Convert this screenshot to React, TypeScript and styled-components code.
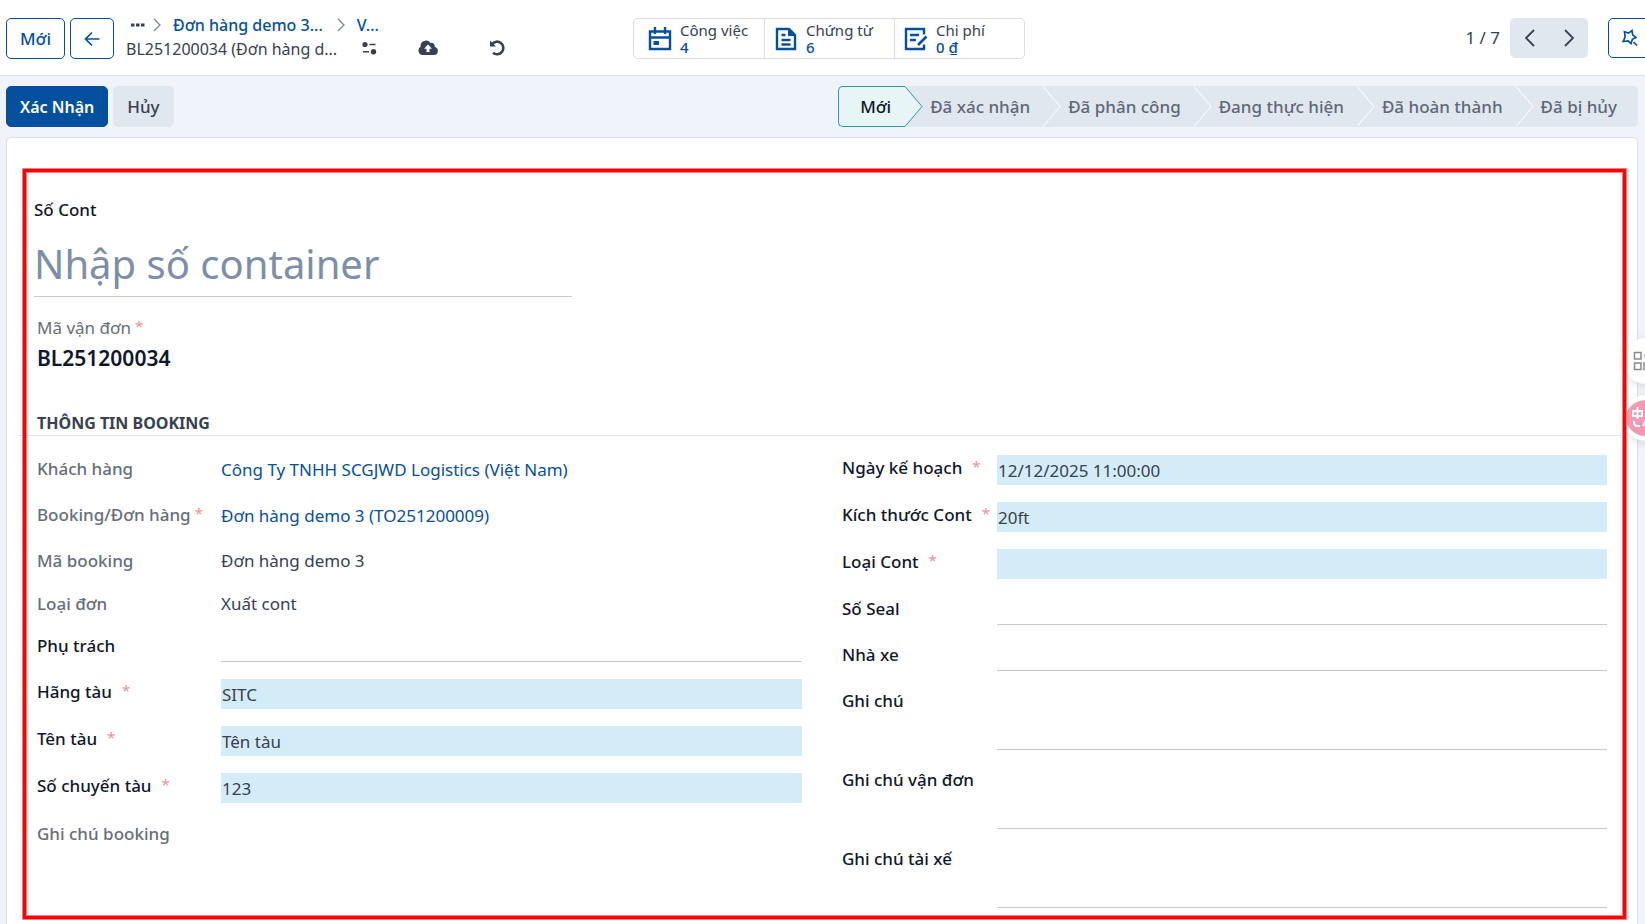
import React from 'react';
import styled, { createGlobalStyle, css } from 'styled-components';

const GlobalStyle = createGlobalStyle`
  *, *::before, *::after { box-sizing: border-box; }
  html, body { margin: 0; height: 100%; }
  body {
    font-family: 'Segoe UI', 'Noto Sans', sans-serif;
    font-size: 17px;
    line-height: 24px;
    color: #374151;
    background: #f0f3f9;
  }
  button, input, textarea { font: inherit; color: inherit; }
  a { color: #04509e; text-decoration: none; }
`;

const Page = styled.div`
  position: relative;
  display: flex;
  flex-direction: column;
  height: 100vh;
  overflow: hidden;
`;

/* Control panel */

const ControlPanel = styled.header`
  display: grid;
  grid-template-columns: minmax(0, 627px) auto 1fr;
  flex: none;
  height: 76px;
  padding: 18px 0 16px 6px;
  background: #fff;
  border-bottom: 1px solid #d8dfea;
`;

const PanelStart = styled.div`
  display: flex;
  align-items: flex-start;
`;

type ButtonKind = 'outline' | 'primary' | 'secondary';

const Button = styled.button<{ $kind: ButtonKind }>`
  display: inline-flex;
  align-items: center;
  justify-content: center;
  height: 41px;
  padding: 0 13px;
  border: 1px solid #04509e;
  border-radius: 5px;
  font-weight: 500;
  white-space: nowrap;
  background: #fff;
  color: #04509e;
  ${({ $kind }) => $kind === 'primary' && css`
    background: #04509e;
    color: #fff;
    font-size: 16px;
    font-weight: 600;
  `}
  ${({ $kind }) => $kind === 'secondary' && css`
    background: #e1e7ef;
    border-color: #e1e7ef;
    color: #374151;
  `}
`;

const ButtonGroup = styled.div`
  display: flex;
  gap: 5px;
`;

const Breadcrumbs = styled.nav`
  display: flex;
  flex-direction: column;
  margin: -5px 0 0 12px;
`;

const Trail = styled.div`
  display: flex;
  align-items: center;
  height: 24px;
  padding-left: 5px;
  font-size: 16px;
  font-weight: 500;
  svg { margin: 0 12px 0 8px; color: #7b8494; }
  a + svg { margin-left: 14px; }
`;

const MoreButton = styled.button`
  display: flex;
  padding: 0;
  border: 0;
  background: none;
  svg { margin: 0; color: #374151; }
`;

const Current = styled.div`
  display: flex;
  align-items: center;
  height: 24px;
  font-size: 16px;
`;

const IconButton = styled.button<{ $gap: number }>`
  display: flex;
  margin-left: ${({ $gap }) => $gap}px;
  padding: 0 0 2px;
  border: 0;
  background: none;
  color: #374151;
`;

const Stats = styled.div`
  display: grid;
  grid-template-columns: repeat(3, 130px);
  height: 41px;
  border: 1px solid #d9dce9;
  border-radius: 5px;
`;

const Stat = styled.button`
  display: flex;
  align-items: center;
  gap: 8px;
  padding: 0 0 0 9px;
  border: 0;
  background: none;
  text-align: left;
  font-size: 15px;
  line-height: 17px;
  white-space: nowrap;
  &:first-child { padding-left: 14px; }
  & + & { border-left: 1px solid #d9dce9; }
  svg { flex: none; color: #04509e; }
  strong { display: block; font-weight: 500; color: #04509e; }
`;

const PanelEnd = styled.div`
  display: flex;
  justify-content: flex-end;
  align-items: center;
  height: 40px;
`;

const Pager = styled.div`
  display: flex;
  margin: 0 20px 0 10px;
  border-radius: 5px;
  background: #e1e7ef;
`;

const PagerButton = styled.button`
  display: flex;
  align-items: center;
  justify-content: center;
  width: 39px;
  height: 40px;
  padding: 0;
  border: 0;
  background: none;
  color: #374151;
`;

const PinButton = styled(Button)`
  width: 45px;
  height: 40px;
  margin-right: -8px;
  padding: 0 2px 0 0;
`;

/* Status bar */

const StatusBar = styled.div`
  display: flex;
  justify-content: space-between;
  flex: none;
  padding: 10px 7px 10px 6px;
`;

const Steps = styled.ol`
  display: flex;
  margin: 0;
  padding: 0;
  list-style: none;
`;

const Step = styled.li<{ $active?: boolean }>`
  position: relative;
  display: flex;
  align-items: center;
  height: 41px;
  padding: 0 13px 0 25px;
  font-weight: 500;
  color: #5f6877;
  background: #e1e7ef;
  &:last-child { padding-right: 21px; border-radius: 0 5px 5px 0; }
  ${({ $active }) => $active && css`
    padding: 0 14px 0 21px;
    color: #0f172a;
    background: #e8f5f5;
    border: 1px solid #2b9a9a;
    border-right: 0;
    border-radius: 5px 0 0 5px;
  `}
`;

const StepTip = styled.svg<{ $active?: boolean }>`
  position: absolute;
  z-index: 1;
  top: ${({ $active }) => ($active ? -1 : 0)}px;
  right: -18px;
  fill: ${({ $active }) => ($active ? '#e8f5f5' : '#e1e7ef')};
  stroke: ${({ $active }) => ($active ? '#2b9a9a' : '#fff')};
`;

/* Form sheet */

const Sheet = styled.main`
  flex: 1 0 auto;
  margin: 0 7px 0 6px;
  padding: 30px 10px 16px;
  border: 1px solid #d8dfea;
  border-radius: 5px;
  background: #fff;
`;

const Framed = styled.div`
  position: relative;
  padding-bottom: 12px;
`;

const Frame = styled.div`
  position: absolute;
  z-index: 3;
  inset: 1px 1px 1px 6px;
  border: 3px solid #f00;
  box-shadow: 0 0 0 1px #ff8080, inset 0 0 0 1px #ff8080;
  pointer-events: none;
`;

const TitleBlock = styled.div`
  display: flex;
  flex-direction: column;
  width: 555px;
  padding: 30px 0 0 17px;
`;

const Label = styled.label<{ $muted?: boolean }>`
  font-weight: 500;
  color: ${({ $muted }) => ($muted ? '#666e7b' : '#0f172a')};
`;

const TitleInput = styled.input`
  height: 75px;
  padding: 8px 0 0;
  border: 0;
  border-bottom: 1px solid #c9cccf;
  outline: 0;
  background: none;
  font-size: 40px;
  &::placeholder { color: #7d8ea8; opacity: 1; }
`;

const CodeBlock = styled.div`
  padding: 19px 20px 0;
  color: #666e7b;
`;

const Code = styled.div`
  margin-top: 4px;
  font-size: 21px;
  line-height: 28px;
  font-weight: 600;
  color: #0f172a;
`;

const Star = styled.sup<{ $spaced?: boolean }>`
  margin-left: ${({ $spaced }) => ($spaced ? 10 : 4)}px;
  vertical-align: 2px;
  font-size: 15px;
  line-height: 0;
  font-weight: 400;
  color: #ee9090;
`;

const SectionTitle = styled.h2`
  margin: 39px 0 19px;
  padding: 0 20px;
  border-bottom: 1px solid #e2e4e8;
  font-size: 16px;
  line-height: 24px;
  font-weight: 700;
  color: #374151;
`;

const Columns = styled.div`
  display: grid;
  grid-template-columns: 1fr 1fr;
  gap: 40px;
  padding: 0 20px;
`;

const Column = styled.div<{ $label: number }>`
  display: grid;
  grid-template-columns: ${({ $label }) => $label}px minmax(0, 1fr);
  grid-auto-rows: min-content;
  row-gap: 17px;
  white-space: nowrap;
`;

const RowLabel = styled(Label)`
  padding-top: ${({ $muted }) => ($muted ? 2 : 1)}px;
`;

const Value = styled.div<{ $link?: boolean }>`
  height: ${({ $link }) => ($link ? 29 : 26)}px;
  padding-top: ${({ $link }) => ($link ? 3 : 2)}px;
`;

const fieldStyle = css<{ $required?: boolean }>`
  display: block;
  width: 100%;
  height: 29px;
  padding: 0 1px;
  border: 0;
  border-bottom: 1px solid #c9cccf;
  border-radius: 0;
  outline: 0;
  background: none;
  ${({ $required }) => $required && css`
    height: 30px;
    border-bottom: 0;
    background: #d4ebf8;
  `}
`;

const Field = styled.input`${fieldStyle}`;

const Area = styled.textarea`
  ${fieldStyle}
  height: 62px;
  resize: none;
`;

/* Floating helper on the window edge */

const Dock = styled.aside`
  position: absolute;
  z-index: 2;
  top: 338px;
  right: -24px;
  display: flex;
  flex-direction: column;
  gap: 11px;
`;

const DockButton = styled.button<{ $pink?: boolean }>`
  display: flex;
  align-items: center;
  width: 46px;
  height: 46px;
  padding: 0 0 0 10px;
  border: 0;
  border-radius: 23px;
  background: #fff;
  color: #8a8a8a;
  box-shadow: 0 2px 8px rgba(60, 70, 90, 0.16);
  ${({ $pink }) => $pink && css`
    padding-left: 6px;
    border: 5px solid #fff;
    border-left-width: 3px;
    background: #f299b3;
    color: #fff;
  `}
`;

const Chevron = ({ left = false, w = 8, h = 14 }: { left?: boolean; w?: number; h?: number }) => (
  <svg width={w} height={h} viewBox={`0 0 ${w} ${h}`} fill="none" stroke="currentColor" strokeWidth={w > 8 ? 1.8 : 1.3}>
    <path d={left ? `M${w - 1} 1L1 ${h / 2}L${w - 1} ${h - 1}` : `M1 1L${w - 1} ${h / 2}L1 ${h - 1}`} />
  </svg>
);

const CalendarIcon = () => (
  <svg width="24" height="24" viewBox="0 0 24 24" fill="none" stroke="currentColor" strokeWidth="2.400">
    <path d="M2 4.500h20V22H2zM2 10.500h20M7 0v7M17 0v7" />
    <path d="M5.500 14h5.500v4H5.500z" fill="currentColor" stroke="none" />
  </svg>
);

const DocumentIcon = () => (
  <svg width="24" height="24" viewBox="0 0 24 24" fill="none" stroke="currentColor" strokeWidth="2.400">
    <path d="M3 2h12l6 6v14H3zM7.500 8h4M7.500 13h9M7.500 17.500h9" />
    <path d="M14 1l8 8h-8z" fill="currentColor" stroke="none" />
  </svg>
);

const NoteIcon = () => (
  <svg width="24" height="24" viewBox="0 0 24 24" fill="none" stroke="currentColor" strokeWidth="2.400">
    <path d="M20 7.500V2H2v20h18v-4.500M6 8h9M6 13h6" />
    <path d="M22.500 9.500l-8.500 8.500" strokeWidth="2.600" />
  </svg>
);

const steps = ['Mới', 'Đã xác nhận', 'Đã phân công', 'Đang thực hiện', 'Đã hoàn thành', 'Đã bị hủy'];

interface FieldSpec {
  id: string;
  label: string;
  value?: string;
  kind: 'link' | 'text' | 'input' | 'area';
  required?: boolean;
}

const leftFields: FieldSpec[] = [
  { id: 'customer', label: 'Khách hàng', value: 'Công Ty TNHH SCGJWD Logistics (Việt Nam)', kind: 'link' },
  { id: 'order', label: 'Booking/Đơn hàng', value: 'Đơn hàng demo 3 (TO251200009)', kind: 'link', required: true },
  { id: 'booking', label: 'Mã booking', value: 'Đơn hàng demo 3', kind: 'text' },
  { id: 'type', label: 'Loại đơn', value: 'Xuất cont', kind: 'text' },
  { id: 'owner', label: 'Phụ trách', kind: 'input' },
  { id: 'line', label: 'Hãng tàu', value: 'SITC', kind: 'input', required: true },
  { id: 'vessel', label: 'Tên tàu', value: 'Tên tàu', kind: 'input', required: true },
  { id: 'voyage', label: 'Số chuyến tàu', value: '123', kind: 'input', required: true },
  { id: 'bookingNote', label: 'Ghi chú booking', kind: 'text' },
];

const rightFields: FieldSpec[] = [
  { id: 'planned', label: 'Ngày kế hoạch', value: '12/12/2025 11:00:00', kind: 'input', required: true },
  { id: 'size', label: 'Kích thước Cont', value: '20ft', kind: 'input', required: true },
  { id: 'contType', label: 'Loại Cont', kind: 'input', required: true },
  { id: 'seal', label: 'Số Seal', kind: 'input' },
  { id: 'carrier', label: 'Nhà xe', kind: 'input' },
  { id: 'note', label: 'Ghi chú', kind: 'area' },
  { id: 'waybillNote', label: 'Ghi chú vận đơn', kind: 'area' },
  { id: 'driverNote', label: 'Ghi chú tài xế', kind: 'area' },
];

function FieldRow({ id, label, value, kind, required }: FieldSpec) {
  const editable = kind === 'input' || kind === 'area';
  return (
    <>
      <RowLabel as={editable ? 'label' : 'span'} htmlFor={editable ? id : undefined} $muted={!editable}>
        {label}
        {required && <Star $spaced={editable}>*</Star>}
      </RowLabel>
      {kind === 'link' && <Value $link><a href="#record">{value}</a></Value>}
      {kind === 'text' && <Value>{value}</Value>}
      {kind === 'input' && <Field id={id} defaultValue={value} $required={required} />}
      {kind === 'area' && <Area id={id} defaultValue={value} />}
    </>
  );
}

export default function App() {
  return (
    <Page>
      <GlobalStyle />
      <ControlPanel>
        <PanelStart>
          <ButtonGroup>
            <Button $kind="outline">Mới</Button>
            <Button $kind="outline" aria-label="Quay lại">
              <svg width="16" height="16" viewBox="0 0 16 16" fill="none" stroke="currentColor" strokeWidth="1.700">
                <path d="M15.500 8H2M8 1.500L1.500 8L8 14.500" />
              </svg>
            </Button>
          </ButtonGroup>
          <Breadcrumbs>
            <Trail>
              <MoreButton aria-label="Thêm">
                <svg width="14" height="4" viewBox="0 0 14 4" fill="currentColor">
                  <path d="M0 .5h3.500v3H0zM5 .5h3.500v3H5zM10 .5h3.500v3H10z" />
                </svg>
              </MoreButton>
              <Chevron />
              <a href="#orders">Đơn hàng demo 3...</a>
              <Chevron />
              <a href="#waybills">V...</a>
            </Trail>
            <Current>
              <span>BL251200034 (Đơn hàng d...</span>
              <IconButton $gap={25} aria-label="Tùy chọn">
                <svg width="15" height="14" viewBox="0 0 15 14" fill="currentColor">
                  <circle cx="3" cy="3.500" r="2.600" />
                  <path d="M7.500 2.700h6v1.600h-6zM1 10h6v1.600H1z" />
                  <circle cx="11.500" cy="10.700" r="2.700" />
                </svg>
              </IconButton>
              <IconButton $gap={41} aria-label="Lưu">
                <svg width="20" height="16" viewBox="0 0 20 16">
                  <path d="M4.500 15A4.500 4.500 0 0 1 2.600 6.700 5.400 5.400 0 0 1 12.400 3a3.400 3.400 0 0 1 4.300 4.100A4 4 0 0 1 15.800 15z" fill="currentColor" />
                  <path d="M10 4.500l4 4.200h-2.500V12h-3V8.700H6z" fill="#fff" />
                </svg>
              </IconButton>
              <IconButton $gap={51} aria-label="Hủy thay đổi">
                <svg width="18" height="18" viewBox="0 0 18 18" fill="none" stroke="currentColor" strokeWidth="2.600">
                  <path d="M3 5.200A6.300 6.300 0 1 1 4 13.800" />
                  <path d="M1 1.500v6h6z" fill="currentColor" stroke="none" />
                </svg>
              </IconButton>
            </Current>
          </Breadcrumbs>
        </PanelStart>
        <Stats>
          <Stat><CalendarIcon /><span>Công việc<strong>4</strong></span></Stat>
          <Stat><DocumentIcon /><span>Chứng từ<strong>6</strong></span></Stat>
          <Stat><NoteIcon /><span>Chi phí<strong>0 ₫</strong></span></Stat>
        </Stats>
        <PanelEnd>
          <span>1 / 7</span>
          <Pager>
            <PagerButton aria-label="Trước"><Chevron left w={10} h={18} /></PagerButton>
            <PagerButton aria-label="Sau"><Chevron w={10} h={18} /></PagerButton>
          </Pager>
          <PinButton $kind="outline" aria-label="Ghim">
            <svg width="17" height="18" viewBox="0 0 17 18" fill="none" stroke="currentColor" strokeWidth="1.700">
              <path d="M3.500 2.800l4 1.300L11 1.500l.6 4.300 3.400 2.800-3.600 1.700-1.400 4.200-3-2.700-4.800.7 1.900-4.500z" />
              <path d="M12.500 13l3.500 3.500" />
            </svg>
          </PinButton>
        </PanelEnd>
      </ControlPanel>

      <StatusBar>
        <ButtonGroup>
          <Button $kind="primary">Xác Nhận</Button>
          <Button $kind="secondary">Hủy</Button>
        </ButtonGroup>
        <Steps>
          {steps.map((name, i) => (
            <Step key={name} $active={i === 0}>
              {name}
              {i < steps.length - 1 && (
                <StepTip $active={i === 0} width="18" height="41" viewBox="0 0 18 41">
                  <path d="M0 .5L17 20.500L0 40.500" />
                </StepTip>
              )}
            </Step>
          ))}
        </Steps>
      </StatusBar>

      <Sheet>
        <Framed>
          <Frame />
          <TitleBlock>
            <Label htmlFor="container">Số Cont</Label>
            <TitleInput id="container" placeholder="Nhập số container" />
          </TitleBlock>
          <CodeBlock>
            Mã vận đơn<Star>*</Star>
            <Code>BL251200034</Code>
          </CodeBlock>
          <SectionTitle>THÔNG TIN BOOKING</SectionTitle>
          <Columns>
            <Column $label={184}>{leftFields.map((f) => <FieldRow key={f.id} {...f} />)}</Column>
            <Column $label={155}>{rightFields.map((f) => <FieldRow key={f.id} {...f} />)}</Column>
          </Columns>
        </Framed>
      </Sheet>

      <Dock>
        <DockButton aria-label="Ứng dụng">
          <svg width="20" height="20" viewBox="0 0 20 20" fill="none" stroke="currentColor" strokeWidth="1.500">
            <path d="M1.500 1.500h6.500v6.500H1.500zM1.500 12h6.500v6.500H1.500zM11 4.500h7M11 12h6.500v6.500H11z" />
          </svg>
        </DockButton>
        <DockButton $pink aria-label="Dịch">
          <svg width="24" height="24" viewBox="0 0 24 24" fill="none" stroke="currentColor" strokeWidth="2">
            <path d="M1 5h9v5H1zM5.500 1v12M2 15v1q0 4 4 4h2M11 20l4-8 4 8" />
          </svg>
        </DockButton>
      </Dock>
    </Page>
  );
}
